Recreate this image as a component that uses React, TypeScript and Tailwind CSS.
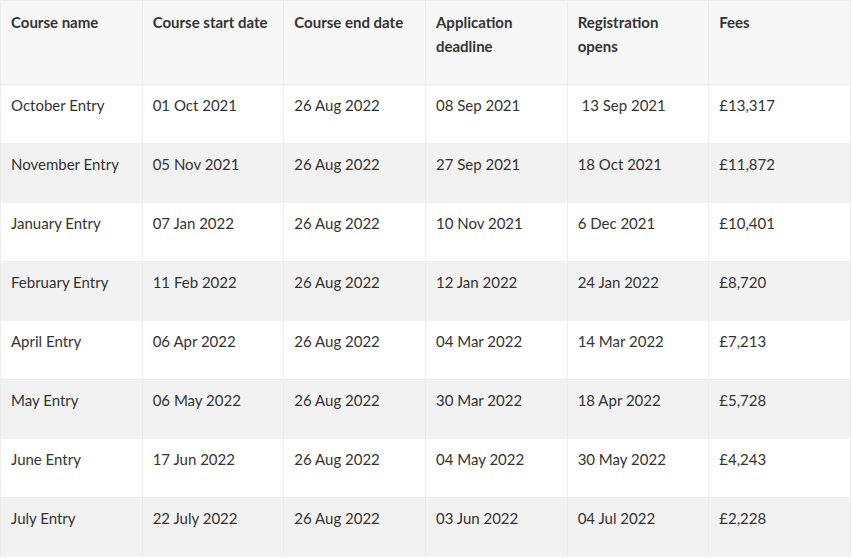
import React from "react";

type Row = {
  name: string;
  start: string;
  end: string;
  deadline: string;
  opens: string;
  fees: string;
};

const rows: Row[] = [
  { name: "October Entry", start: "01 Oct 2021", end: "26 Aug 2022", deadline: "08 Sep 2021", opens: "\u00a013 Sep 2021", fees: "£13,317" },
  { name: "November Entry", start: "05 Nov 2021", end: "26 Aug 2022", deadline: "27 Sep 2021", opens: "18 Oct 2021", fees: "£11,872" },
  { name: "January Entry", start: "07 Jan 2022", end: "26 Aug 2022", deadline: "10 Nov 2021", opens: "6 Dec 2021", fees: "£10,401" },
  { name: "February Entry", start: "11 Feb 2022", end: "26 Aug 2022", deadline: "12 Jan 2022", opens: "24 Jan 2022", fees: "£8,720" },
  { name: "April Entry", start: "06 Apr 2022", end: "26 Aug 2022", deadline: "04 Mar 2022", opens: "14 Mar 2022", fees: "£7,213" },
  { name: "May Entry", start: "06 May 2022", end: "26 Aug 2022", deadline: "30 Mar 2022", opens: "18 Apr 2022", fees: "£5,728" },
  { name: "June Entry", start: "17 Jun 2022", end: "26 Aug 2022", deadline: "04 May 2022", opens: "30 May 2022", fees: "£4,243" },
  { name: "July Entry", start: "22 July 2022", end: "26 Aug 2022", deadline: "03 Jun 2022", opens: "04 Jul 2022", fees: "£2,228" },
];

const headers = [
  "Course name",
  "Course start date",
  "Course end date",
  "Application deadline",
  "Registration opens",
  "Fees",
];

export default function App() {
  return (
    <div className="w-[852px] bg-white font-['Lato',sans-serif] text-[15px] leading-6 text-[#333]">
      <table className="w-[851px] table-fixed border-collapse">
        <thead>
          <tr className="h-[84px] bg-[#f7f7f7]">
            {headers.map((h) => (
              <th
                key={h}
                className="border border-[#eeeeee] pl-[10px] pr-3 pt-[9px] pb-[24px] text-left align-top font-bold"
              >
                {h}
              </th>
            ))}
          </tr>
        </thead>
        <tbody>
          {rows.map((r, i) => {
            const cells = [r.name, r.start, r.end, r.deadline, r.opens, r.fees];
            return (
              <tr key={r.name} className={i % 2 === 0 ? "h-[59px] bg-white" : "h-[59px] bg-[#f2f2f2]"}>
                {cells.map((c, j) => (
                  <td
                    key={j}
                    className={
                      i % 2 === 0
                        ? "border border-[#eeeeee] pl-[10px] pr-3 pt-[8px] pb-[24px] align-top whitespace-pre"
                        : "border border-[#f2f2f2] border-x-[#ececec] pl-[10px] pr-3 pt-[8px] pb-[24px] align-top whitespace-pre"
                    }
                  >
                    {c}
                  </td>
                ))}
              </tr>
            );
          })}
        </tbody>
      </table>
    </div>
  );
}
